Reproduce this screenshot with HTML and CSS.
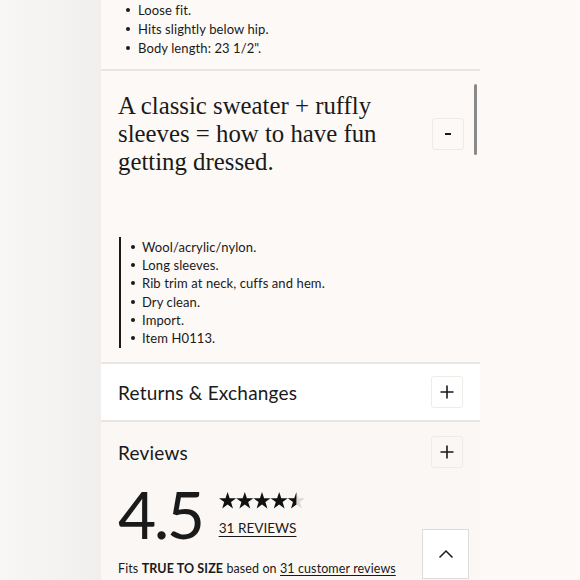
FILE: index.html
```html
<!DOCTYPE html>
<html>
<head>
<meta charset="utf-8">
<link rel="stylesheet" href="styles.css">
</head>
<body>
<div class="page">
  <div class="gutter-left"></div>
  <main class="col">
    <section class="sec sec-top">
      <ul class="bullets bullets-top">
        <li>Loose fit.</li>
        <li>Hits slightly below hip.</li>
        <li>Body length: 23 1/2".</li>
      </ul>
    </section>
    <section class="sec sec-desc">
      <div class="acc-head">
        <h2 class="serif-title">A classic sweater + ruffly sleeves = how to have fun getting dressed.</h2>
        <button class="acc-btn minus"><svg width="10" height="4" viewBox="0 0 10 4"><rect x="2" y="1" width="6" height="2" fill="#1a1a1a"/></svg></button>
      </div>
      <ul class="bullets bullets-quote">
        <li>Wool/acrylic/nylon.</li>
        <li>Long sleeves.</li>
        <li>Rib trim at neck, cuffs and hem.</li>
        <li>Dry clean.</li>
        <li>Import.</li>
        <li>Item H0113.</li>
      </ul>
    </section>
    <section class="sec sec-returns">
      <div class="acc-row">
        <span class="acc-label">Returns &amp; Exchanges</span>
        <button class="acc-btn"><svg width="14" height="14" viewBox="0 0 14 14"><path d="M7 0.5V13.5M0.5 7H13.5" stroke="#1a1a1a" stroke-width="1.6" fill="none"/></svg></button>
      </div>
    </section>
    <section class="sec sec-reviews">
      <div class="acc-row reviews-row">
        <span class="acc-label">Reviews</span>
        <button class="acc-btn"><svg width="14" height="14" viewBox="0 0 14 14"><path d="M7 0.5V13.5M0.5 7H13.5" stroke="#1a1a1a" stroke-width="1.6" fill="none"/></svg></button>
      </div>
      <div class="rating">
        <div class="score">4.5</div>
        <div class="rating-side">
          <div class="stars">
            <svg width="88" height="18" viewBox="0 0 88 18">
              <defs>
                <path id="st" d="M8.6 0L10.7 6.2H17.2L12 10L14 16.6L8.6 12.6L3.2 16.6L5.2 10L0 6.2H6.5Z"/>
                <clipPath id="half"><rect x="0" y="0" width="8.6" height="18"/></clipPath>
              </defs>
              <use href="#st" x="0" fill="#111"/>
              <use href="#st" x="17.2" fill="#111"/>
              <use href="#st" x="34.4" fill="#111"/>
              <use href="#st" x="51.6" fill="#111"/>
              <use href="#st" x="68.8" fill="#dcdad8"/>
              <use href="#st" x="68.8" fill="#111" clip-path="url(#half)"/>
            </svg>
          </div>
          <a class="reviews-link">31 REVIEWS</a>
        </div>
      </div>
      <p class="fits">Fits <b>TRUE TO SIZE</b> based on <a>31 customer reviews</a></p>
    </section>
  </main>
  <div class="gutter-right"></div>
</div>
<div class="scrollbar"></div>
<button class="to-top"><svg width="16" height="10" viewBox="0 0 16 10"><path d="M1.5 8.5L8 2L14.5 8.5" stroke="#1a1a1a" stroke-width="1.5" fill="none"/></svg></button>
</body>
</html>
```
FILE: styles.css
```css
html, body {
  margin: 0;
  padding: 0;
  height: 580px;
  overflow: hidden;
}
body {
  font-family: Lato, "Noto Sans", sans-serif;
  color: #1a1a1a;
  background: #fcf9f6;
}
.page {
  display: flex;
  height: 580px;
}
.gutter-left {
  width: 101px;
  flex: none;
  background: linear-gradient(to right, #f9f7f5, #f1efed);
}
.gutter-right {
  flex: 1;
  background: #fcf9f6;
}
.col {
  width: 379px;
  flex: none;
  display: flex;
  flex-direction: column;
  background: #fcf9f6;
}
.sec {
  border-bottom: 2px solid #e9e5e1;
}
.bullets {
  list-style: none;
  margin: 0;
  font-size: 13px;
  letter-spacing: 0.1px;
}
.bullets li {
  display: flex;
  align-items: center;
}
.bullets li::before {
  content: "";
  width: 4px;
  height: 4px;
  border-radius: 50%;
  background: #1a1a1a;
  flex: none;
}
.bullets-top {
  padding: 1px 0 0 25px;
}
.bullets-top li {
  height: 18.7px;
}
.bullets-top li::before {
  margin-right: 8px;
}
.sec-top {
  height: 71px;
  box-sizing: border-box;
}
.sec-desc {
  padding: 21px 0 14px;
}
.acc-head {
  display: flex;
  align-items: center;
  justify-content: space-between;
  padding: 0 16px 0 17px;
}
.serif-title {
  margin: 0;
  width: 300px;
  font-family: "Liberation Serif", "Times New Roman", serif;
  font-weight: 400;
  font-size: 24.8px;
  line-height: 28px;
  color: #1a1a1a;
}
.acc-btn {
  width: 32px;
  height: 32px;
  flex: none;
  border: 1px solid #efebe7;
  border-radius: 3px;
  background: transparent;
  padding: 0;
  display: flex;
  align-items: center;
  justify-content: center;
}
.bullets-quote {
  margin: 61px 0 0 18px;
  padding: 1px 0 1px 10px;
  border-left: 2px solid #1a1a1a;
}
.bullets-quote li {
  height: 18.2px;
}
.bullets-quote li::before {
  margin-right: 7px;
}
.sec-returns {
  background: #ffffff;
}
.acc-row {
  display: flex;
  align-items: center;
  justify-content: space-between;
  padding: 12px 17px 12px 17px;
}
.acc-label {
  font-size: 19px;
  letter-spacing: 0.2px;
}
.sec-reviews {
  background: #faf7f4;
  border-bottom: none;
  flex: 1;
}
.reviews-row {
  padding: 14px 17px 13px 17px;
}
.rating {
  display: flex;
  padding-left: 17px;
  gap: 16px;
}
.score {
  font-size: 66px;
  line-height: 66px;
  letter-spacing: -2.5px;
}
.rating-side {
  display: flex;
  flex-direction: column;
  padding-top: 11px;
}
.stars {
  height: 18px;
  display: flex;
}
.reviews-link {
  margin-top: 10px;
  font-size: 13.6px;
  text-decoration: underline;
  text-underline-offset: 3px;
  text-decoration-thickness: 1px;
}
.fits {
  margin: 14px 0 0 17px;
  font-size: 12.5px;
  letter-spacing: 0.1px;
}
.fits a {
  text-decoration: underline;
  text-underline-offset: 2px;
}
.scrollbar {
  position: absolute;
  left: 474px;
  top: 84px;
  width: 3px;
  height: 71px;
  border-radius: 2px;
  background: #8a8a8a;
}
.to-top {
  position: absolute;
  left: 422px;
  top: 529px;
  width: 47px;
  height: 50px;
  background: #ffffff;
  border: 1px solid #dedcda;
  padding: 0;
  display: flex;
  align-items: center;
  justify-content: center;
}
```
